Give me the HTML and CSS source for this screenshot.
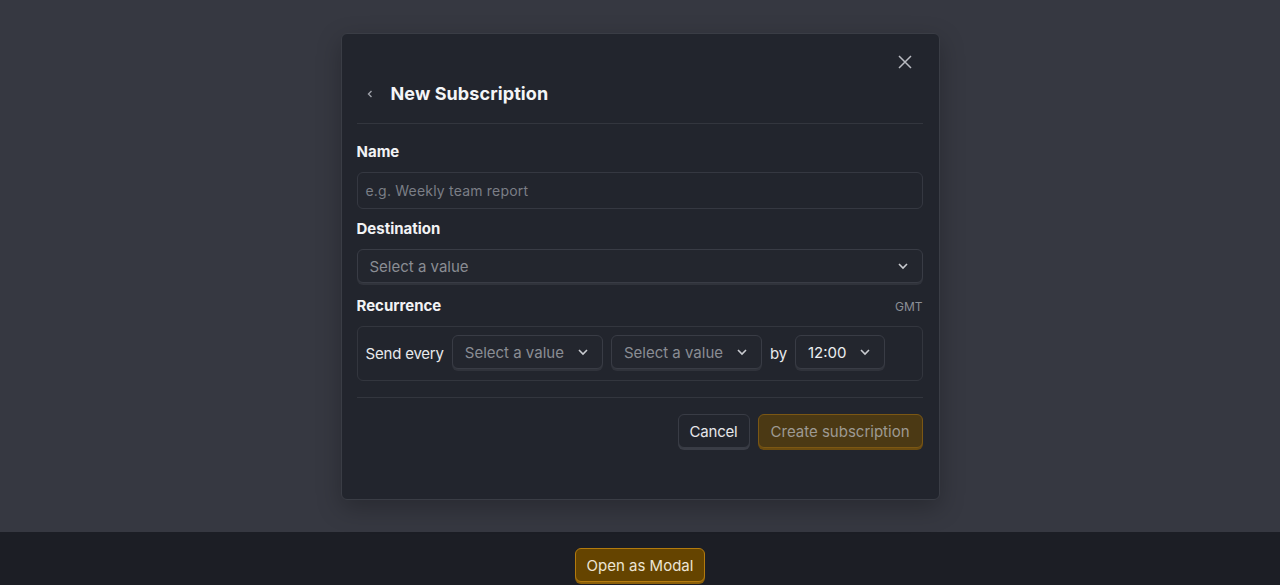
FILE: index.html
```html
<!DOCTYPE html>
<html lang="en">
<head>
<meta charset="utf-8">
<title>New Subscription</title>
<link rel="stylesheet" href="styles.css">
</head>
<body>
<div class="stage">
  <div class="modal">
    <button class="close" aria-label="Close">
      <svg width="16" height="16" viewBox="0 0 16 16"><path d="M2 2L14 14M14 2L2 14" stroke="#b9bbc1" stroke-width="1.5" fill="none"/></svg>
    </button>
    <div class="header">
      <span class="back">
        <svg width="8" height="10" viewBox="0 0 8 10"><path d="M5.5 2L2.5 5L5.5 8" stroke="#9ea1a8" stroke-width="1.4" fill="none"/></svg>
      </span>
      <h1 class="title">New Subscription</h1>
    </div>
    <div class="field">
      <label class="label">Name</label>
      <div class="input">e.g. Weekly team report</div>
    </div>
    <div class="field">
      <label class="label">Destination</label>
      <div class="select select-wide">
        <span class="placeholder">Select a value</span>
        <svg class="chev" width="12" height="8" viewBox="0 0 12 8"><path d="M2 2L6 6L10 2" stroke="#c9cbd0" stroke-width="1.6" fill="none"/></svg>
      </div>
    </div>
    <div class="field">
      <div class="label-row">
        <label class="label">Recurrence</label>
        <span class="tz">GMT</span>
      </div>
      <div class="recur">
        <span class="word">Send every</span>
        <div class="select select-sm">
          <span class="placeholder">Select a value</span>
          <svg class="chev" width="12" height="8" viewBox="0 0 12 8"><path d="M2 2L6 6L10 2" stroke="#c9cbd0" stroke-width="1.6" fill="none"/></svg>
        </div>
        <div class="select select-sm">
          <span class="placeholder">Select a value</span>
          <svg class="chev" width="12" height="8" viewBox="0 0 12 8"><path d="M2 2L6 6L10 2" stroke="#c9cbd0" stroke-width="1.6" fill="none"/></svg>
        </div>
        <span class="word">by</span>
        <div class="select select-sm">
          <span class="value">12:00</span>
          <svg class="chev" width="12" height="8" viewBox="0 0 12 8"><path d="M2 2L6 6L10 2" stroke="#c9cbd0" stroke-width="1.6" fill="none"/></svg>
        </div>
      </div>
    </div>
    <div class="footer">
      <button class="btn btn-cancel">Cancel</button>
      <button class="btn btn-primary" disabled>Create subscription</button>
    </div>
  </div>
</div>
<div class="bar">
  <button class="btn btn-open">Open as Modal</button>
</div>
</body>
</html>
```
FILE: styles.css
```css
* { box-sizing: border-box; }
html, body { margin: 0; padding: 0; }
body {
  width: 1280px;
  height: 585px;
  overflow: hidden;
  background: #1c1e25;
  font-family: Inter, "Noto Sans", "Liberation Sans", sans-serif;
  font-size: 15px;
  color: #eceef1;
}
.stage {
  height: 532px;
  background: #363841;
  display: flex;
  align-items: flex-start;
  justify-content: center;
  padding-top: 33px;
}
.modal {
  position: relative;
  width: 599px;
  height: 467px;
  background: #22252d;
  border: 1px solid #3a3d45;
  border-radius: 6px;
  padding: 46px 16px 0 15px;
  box-shadow: 0 8px 24px rgba(0,0,0,0.25);
}
.close {
  position: absolute;
  top: 12px;
  right: 18px;
  width: 32px;
  height: 32px;
  display: flex;
  align-items: center;
  justify-content: center;
  background: none;
  border: 0;
  padding: 0;
}
.header {
  display: flex;
  align-items: center;
  height: 28px;
  box-sizing: content-box;
  padding-bottom: 15px;
  border-bottom: 1px solid #33363e;
}
.back {
  width: 26px;
  height: 28px;
  display: flex;
  align-items: center;
  justify-content: flex-start;
  padding-left: 9px;
  margin-right: 8px;
}
.title {
  margin: 0;
  font-size: 18px;
  line-height: 26px;
  font-weight: 700;
  color: #f4f5f7;
  letter-spacing: 0.1px;
}
.field { display: flex; flex-direction: column; }
.header + .field { margin-top: 18px; }
.field + .field { margin-top: 10px; }
.label {
  font-size: 15px;
  line-height: 20px;
  font-weight: 700;
  color: #f2f3f5;
}
.label-row {
  display: flex;
  justify-content: space-between;
  align-items: center;
  margin-top: 1px;
}
.tz { font-size: 12px; color: #8c8f96; }
.input {
  margin-top: 10px;
  height: 37px;
  border: 1px solid #353841;
  border-radius: 6px;
  padding: 0 8px;
  display: flex;
  align-items: center;
  font-size: 14px;
  letter-spacing: 0.2px;
  color: #7b7e86;
  background: #22252d;
}
.select {
  height: 34px;
  border: 1px solid #393c45;
  border-radius: 6px;
  background: #23262e;
  box-shadow: 0 2px 0 #30333b;
  display: flex;
  align-items: center;
  justify-content: space-between;
}
.select-wide {
  margin-top: 10px;
  padding: 0 13px 0 12px;
  margin-bottom: 2px;
}
.placeholder { color: #8a8d94; }
.value { color: #eceef1; }
.chev { flex: none; }
.select-sm {
  padding: 0 13px 0 12px;
  gap: 13px;
}
.recur {
  margin-top: 10px;
  border: 1px solid #33363e;
  border-radius: 6px;
  padding: 8px 8px 9px 8px;
  display: flex;
  align-items: center;
  gap: 8px;
}
.recur .select { margin-bottom: 2px; }
.word { color: #e8e9ec; letter-spacing: -0.2px; }
.footer {
  margin-top: 16px;
  border-top: 1px solid #33363e;
  padding-top: 16px;
  display: flex;
  justify-content: flex-end;
  gap: 8px;
}
.btn {
  font-family: inherit;
  font-size: 15px;
  height: 34px;
  padding: 0 12px;
  border-radius: 6px;
  cursor: pointer;
}
.btn-cancel {
  background: #22252d;
  border: 1px solid #393c45;
  color: #e6e7ea;
  box-shadow: 0 2px 0 #3a3d46;
  padding: 0 11px;
  letter-spacing: -0.2px;
}
.btn-primary {
  background: #4b3914;
  border: 1px solid #7b5714;
  color: #9d9a93;
  box-shadow: 0 2px 0 #6a4b10;
}
.bar {
  height: 53px;
  display: flex;
  justify-content: center;
  padding-top: 16px;
}
.btn-open {
  background: #654400;
  border: 1px solid #b27a0e;
  color: #ece4d4;
  box-shadow: 0 2px 0 #8a5e08;
  height: 34px;
  padding: 0 11px;
}
```
